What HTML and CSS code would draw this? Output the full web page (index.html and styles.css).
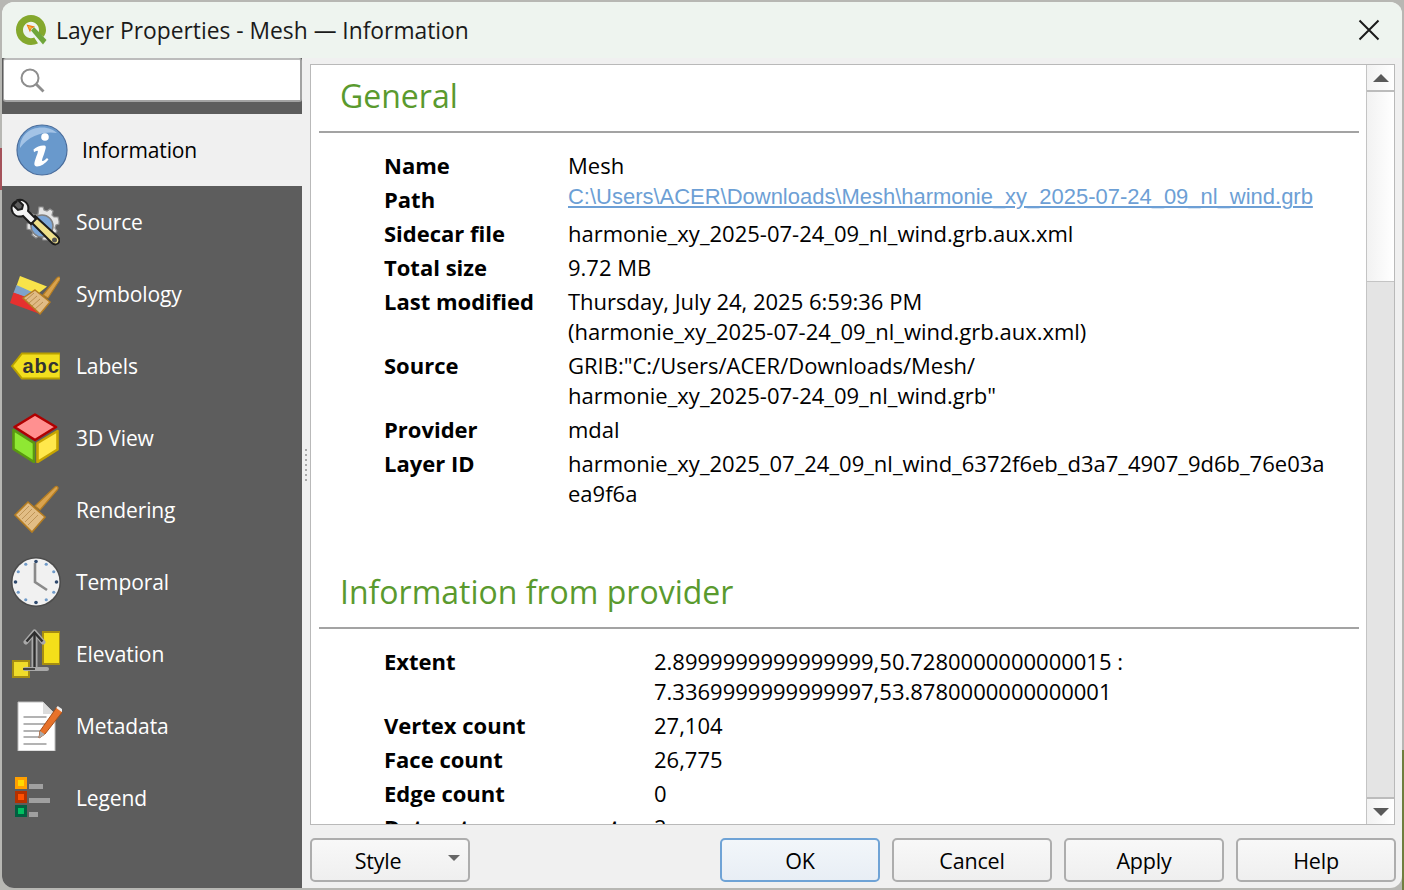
FILE: index.html
```html
<!DOCTYPE html>
<html lang="en">
<head>
<meta charset="utf-8">
<title>Layer Properties - Mesh — Information</title>
<link rel="stylesheet" href="styles.css">
</head>
<body>
<div class="window">
  <header class="titlebar">
    <svg class="qlogo" viewBox="0 0 32 32" width="32" height="32">
      <path d="M16 1C7.700 1 1 7.700 1 16s6.700 15 15 15c2.600 0 5-.6 7-1.700l-3.800-5.700c-1 .4-2 .6-3.200.6-4.400 0-8-3.700-8-8.200S11.600 7.800 16 7.800s8 3.700 8 8.200c0 1-.2 2-.5 2.900l5.200 3.900C30.200 20.500 31 18.300 31 16 31 7.700 24.300 1 16 1z" fill="#84a82d"/>
      <path d="M16 16.500l3-3.500 12.500 13-3.500 4.500z" fill="#6fa63a"/>
      <path d="M11.500 10.500l8.500 2-3.500 2-1.500 4z" fill="#ee7913"/>
      <path d="M13 12l4 1-2 2.500z" fill="#f5b53a"/>
    </svg>
    <span class="title">Layer Properties - Mesh — Information</span>
    <svg class="close" viewBox="0 0 22 22" width="22" height="22"><path d="M1.500 1.500l19 19M20.500 1.500l-19 19" stroke="#1a1a1a" stroke-width="2" fill="none"/></svg>
  </header>
  <div class="body">
    <aside class="sidebar">
      <div class="search">
        <svg viewBox="0 0 26 26" width="26" height="26"><circle cx="11" cy="11" r="8.500" fill="none" stroke="#8e8e8e" stroke-width="2"/><path d="M17 17l7.500 7.500" stroke="#8e8e8e" stroke-width="2.800"/></svg>
      </div>
      <nav class="nav">
        <div class="item active">
          <svg class="ico-big" viewBox="0 0 52 52" width="52" height="52">
            <circle cx="26" cy="26" r="25" fill="#6999cc" stroke="#4a6d9c" stroke-width="1.200"/>
            <path d="M4 24C4 12 13 3.500 26 3.500c7 0 12 2.500 15 5.500C30 7 14 10 4 24z" fill="#a3c3e6"/>
            <circle cx="29" cy="13" r="3.800" fill="#fff"/>
            <path d="M17.500 25.500c3.500-3 7.500-4.500 11-4 2 .5 1.500 2.500 0 7-1.500 4.500-3 8-2.200 8.500 1 .5 3.200-1.300 4.700-3l1.500 1.500c-3 3.700-7.500 7-11.500 7-3.500-.5-3-3-1.500-7.500 1.200-3.500 3-7.500 2.200-8-1-.5-2.500.5-3.700 1.200z" fill="#fff"/>
          </svg>
          <span>Information</span>
        </div>
        <div class="item">
          <svg class="ico" viewBox="0 0 50 50" width="50" height="50">
            <path d="M29 10l4 0 1 3 3 1 3-2 3 2-1 4 2 2 4 0 1 4v3l-3 1-1 3 2 3-3 4-3-1-2 2-1 4h-5l-1-3-3-1-3 2-4-3 1-3-2-2-4-1v-5l3-1 1-3-2-3 3-3 4 1 2-1z" fill="#e4e4e4" stroke="#8f8f8f" stroke-width="1.200"/>
            <circle cx="32" cy="29" r="11" fill="#7ba6d8" stroke="#808080" stroke-width="1.500"/>
            <path d="M25 19l-5 5 22 22c2 2 6 2 7-1 1-2 0-4-1.500-5.500z" fill="#efe08a" stroke="#1c1c1c" stroke-width="2"/>
            <path d="M7 3C2 5 0 10 3 15c2.500 3.500 7 4 10 3l8 8 5-5-8-8c1-4-.5-8-4-10-2-1.300-4-1.500-6-1l5 5-1 4-4 1-5-5z" fill="#f4f4f4" stroke="#1c1c1c" stroke-width="2" transform="translate(0 1)"/>
            <circle cx="44.500" cy="43" r="2.500" fill="#555"/>
          </svg>
          <span>Source</span>
        </div>
        <div class="item">
          <svg class="ico" viewBox="0 0 50 50" width="50" height="50">
            <path d="M10 7l27 10.500-10 8L6.500 17z" fill="#f8e34a"/>
            <path d="M6.500 16l20 9-2 6-21-7z" fill="#7fa3c9"/>
            <path d="M3.500 23.500L24 31l6 14L0 34z" fill="#e6302f"/>
            <path d="M33 26L47 9c1.500-2 4.500-.5 3 1.500L38 29z" fill="#d9a34e" stroke="#b57d22" stroke-width="1.200"/>
            <path d="M25 21l15 12-10 12-17-16z" fill="#e0bb85" stroke="#b57d22" stroke-width="1.500"/>
            <path d="M24 24l-8 7M27 27l-8 7M30 30l-8 7M33 33l-8 7" stroke="#b98e50" stroke-width="1"/>
          </svg>
          <span>Symbology</span>
        </div>
        <div class="item">
          <svg class="ico" viewBox="0 0 50 50" width="50" height="50">
            <path d="M2 25l10-12.500h38.500v25H12z" fill="#f2df1e" stroke="#b8a000" stroke-width="2"/>
            <text x="12.500" y="32" class="abc">abc</text>
          </svg>
          <span>Labels</span>
        </div>
        <div class="item">
          <svg class="ico" viewBox="0 0 50 50" width="50" height="50">
            <path d="M25 1.500L46 14 25 27 4.500 14z" fill="#ff9090" stroke="#b00000" stroke-width="2.600" stroke-linejoin="round"/>
            <path d="M3.500 17L24 30v19L3.500 36z" fill="#8fe833" stroke="#5a9a10" stroke-width="2.600" stroke-linejoin="round"/>
            <path d="M47.500 18L27.500 30v19l20-12.500z" fill="#ffe84c" stroke="#c6a400" stroke-width="2.600" stroke-linejoin="round"/>
          </svg>
          <span>3D View</span>
        </div>
        <div class="item">
          <svg class="ico" viewBox="0 0 50 50" width="50" height="50">
            <path d="M25 21L45 2c2-1.500 4 .5 2.500 2.500L30 25z" fill="#d9a34e" stroke="#b57d22" stroke-width="1.200"/>
            <path d="M18 17l17 15-13 15L5 30z" fill="#e2bd85" stroke="#b57d22" stroke-width="1.600"/>
            <path d="M19 21L9 31M22 24L12 34M25 27L15 37M28 30L18 40" stroke="#bf9558" stroke-width="1"/>
          </svg>
          <span>Rendering</span>
        </div>
        <div class="item">
          <svg class="ico" viewBox="0 0 52 50" width="52" height="50">
            <circle cx="26" cy="25" r="25" fill="#4c4c4c"/>
            <circle cx="26" cy="25" r="23.500" fill="#f1f1f1"/>
            <g fill="#6f9ac8">
              <circle cx="36.250" cy="7.250" r="1.600"/><circle cx="43.750" cy="14.750" r="1.600"/><circle cx="43.750" cy="35.250" r="1.600"/><circle cx="36.250" cy="42.750" r="1.600"/><circle cx="15.750" cy="42.750" r="1.600"/><circle cx="8.250" cy="35.250" r="1.600"/><circle cx="8.250" cy="14.750" r="1.600"/><circle cx="15.750" cy="7.250" r="1.600"/>
            </g>
            <g fill="#2f4a6e">
              <circle cx="26" cy="4.500" r="1.800"/><circle cx="46.500" cy="25" r="1.800"/><circle cx="26" cy="45.500" r="1.800"/><circle cx="5.500" cy="25" r="1.800"/>
            </g>
            <path d="M25 6v19l12 8" fill="none" stroke="#8a8a8a" stroke-width="2.600"/>
          </svg>
          <span class="after-wide">Temporal</span>
        </div>
        <div class="item">
          <svg class="ico" viewBox="0 0 50 50" width="50" height="50">
            <rect x="33" y="3" width="17" height="32" fill="#f4df1a" stroke="#a68d12" stroke-width="2"/>
            <rect x="3" y="32" width="16" height="16" fill="#f0dc2a" stroke="#a68d12" stroke-width="2"/>
            <path d="M15 40h22" stroke="#a9a9a9" stroke-width="4" stroke-linecap="round"/>
            <path d="M13 40h12" stroke="#222" stroke-width="1.500"/>
            <path d="M16 13L24.500 3 33 13" fill="none" stroke="#a9a9a9" stroke-width="5" stroke-linejoin="round" stroke-linecap="round"/>
            <path d="M24.500 5v34" stroke="#a9a9a9" stroke-width="6"/>
            <path d="M16.500 12.500L24.500 3.500l8 9" fill="none" stroke="#2e2e2e" stroke-width="2.400"/>
            <path d="M24.500 5v33" stroke="#2e2e2e" stroke-width="2.400"/>
          </svg>
          <span>Elevation</span>
        </div>
        <div class="item">
          <svg class="ico" viewBox="0 0 52 50" width="52" height="50">
            <path d="M8 1h25l12 12v37H8z" fill="#fff" stroke="#bdbdbd"/>
            <path d="M33 1v12h12z" fill="#dcdcdc"/>
            <path d="M13.500 16h23M13.500 23h23M13.500 30h17M13.500 36h17M13.500 43h23" stroke="#9a9a9a" stroke-width="1.600"/>
            <path d="M47 6l6 4-18 23-6 4 1-7z" fill="#e8722a" stroke="#a8501a" stroke-width="1"/>
            <path d="M47 6l5.500 4" stroke="#eee" stroke-width="2.500"/>
            <path d="M30 30l5 3.500-6 3.500z" fill="#aaa"/>
          </svg>
          <span class="after-wide">Metadata</span>
        </div>
        <div class="item">
          <svg class="ico" viewBox="0 0 50 50" width="50" height="50">
            <rect x="5" y="4" width="12" height="12" fill="#ffa000"/><rect x="8" y="7" width="6" height="6" fill="#ffd900"/>
            <rect x="5" y="18" width="12" height="12" fill="#b33000"/><rect x="8" y="21" width="6" height="6" fill="#ff5000"/>
            <rect x="5" y="32" width="12" height="12" fill="#006040"/><rect x="8" y="35" width="6" height="6" fill="#00c060"/>
            <rect x="19" y="11" width="14" height="5" fill="#a0a0a0"/><rect x="19" y="25" width="21" height="5" fill="#a0a0a0"/><rect x="19" y="39" width="9" height="5" fill="#a0a0a0"/>
          </svg>
          <span>Legend</span>
        </div>
      </nav>
    </aside>
    <div class="splitter"><i class="grip"></i></div>
    <main class="main">
      <div class="browser">
        <div class="content">
          <h2>General</h2>
          <table class="t1">
            <tr><th>Name</th><td>Mesh</td></tr>
            <tr><th>Path</th><td><a class="link">C:\Users\ACER\Downloads\Mesh\harmonie_xy_2025-07-24_09_nl_wind.grb</a></td></tr>
            <tr><th>Sidecar file</th><td>harmonie_xy_2025-07-24_09_nl_wind.grb.aux.xml</td></tr>
            <tr><th>Total size</th><td>9.72 MB</td></tr>
            <tr><th>Last modified</th><td>Thursday, July 24, 2025 6:59:36 PM<br>(harmonie_xy_2025-07-24_09_nl_wind.grb.aux.xml)</td></tr>
            <tr><th>Source</th><td>GRIB:"C:/Users/ACER/Downloads/Mesh/<br>harmonie_xy_2025-07-24_09_nl_wind.grb"</td></tr>
            <tr><th>Provider</th><td>mdal</td></tr>
            <tr><th>Layer ID</th><td>harmonie_xy_2025_07_24_09_nl_wind_6372f6eb_d3a7_4907_9d6b_76e03a<br>ea9f6a</td></tr>
          </table>
          <h2 class="second">Information from provider</h2>
          <table class="t2">
            <tr><th>Extent</th><td>2.8999999999999999,50.7280000000000015 :<br>7.3369999999999997,53.8780000000000001</td></tr>
            <tr><th>Vertex count</th><td>27,104</td></tr>
            <tr><th>Face count</th><td>26,775</td></tr>
            <tr><th>Edge count</th><td>0</td></tr>
            <tr><th>Dataset groups count</th><td>2</td></tr>
          </table>
        </div>
        <div class="scrollbar">
          <div class="sb-btn"><i class="up"></i></div>
          <div class="sb-thumb"></div>
          <div class="sb-track"></div>
          <div class="sb-btn down"><i class="dn"></i></div>
        </div>
      </div>
      <footer class="buttons">
        <button class="btn style">Style<i class="caret"></i></button>
        <span class="spacer"></span>
        <button class="btn default">OK</button>
        <button class="btn">Cancel</button>
        <button class="btn">Apply</button>
        <button class="btn">Help</button>
      </footer>
    </main>
  </div>
</div>
</body>
</html>
```
FILE: styles.css
```css
* { box-sizing: border-box; }
html, body { margin: 0; padding: 0; }
body {
  width: 1404px; height: 890px; overflow: hidden; padding: 2px;
  background-color: #b7b7b3;
  background-image:
    linear-gradient(#a5525a, #a5525a),
    linear-gradient(#6f7f3f, #6f7f3f);
  background-size: 2px 42px, 2px 140px;
  background-position: 0 148px, 100% 750px;
  background-repeat: no-repeat;
  font-family: "Open Sans", "Noto Sans", sans-serif;
  color: #000;
}
.window {
  width: 1400px; height: 886px; background: #f0f0f0;
  border-radius: 12px; overflow: hidden; display: flex; flex-direction: column;
}
.titlebar {
  height: 56px; background: #eef4ef; display: flex; align-items: center;
  padding: 0 22px 0 13px; flex: none;
}
.qlogo { flex: none; }
.title { margin-left: 9px; font-size: 22.8px; color: #1a1a1a; flex: 1; }
.body { flex: 1; display: flex; min-height: 0; }
.sidebar { width: 300px; background: #5d5d5d; flex: none; }
.search {
  height: 44px; background: #fff; margin: 0 0 12px 1px; width: 299px;
  border: 2px solid #a2a2a2; border-top-color: #bcbcbc; border-radius: 3px;
  display: flex; align-items: center; padding: 0 0 0 15px;
  border-left-width: 1px; border-right-width: 2px;
}
.item {
  height: 72px; display: flex; align-items: center; color: #fff;
  font-size: 21px; padding-left: 8px; letter-spacing: -.12px;
}
.item span { margin-left: 16px; }
.item span.after-wide { margin-left: 14px; }
.ico { flex: none; }
.item.active { background: #f0f0f0; color: #000; padding-left: 14px; }
.item.active span { margin-left: 14px; }
.ico-big { flex: none; }
.abc { font: 700 20px "Liberation Sans", sans-serif; fill: #333; letter-spacing: 1px; }
.splitter { width: 8px; flex: none; display: flex; align-items: center; justify-content: center; }
.grip { display: block; width: 2px; height: 32px; margin-bottom: 16px; background: repeating-linear-gradient(#a8a8a8 0 2px, transparent 2px 5px); }
.main { flex: 1; display: flex; flex-direction: column; padding: 6px 6px 6px 0; min-width: 0; }
.browser {
  height: 761px; flex: none; background: #fff; border: 1px solid #b9b9b9; display: flex; margin-right: 1px;
}
.content { flex: 1; overflow: hidden; padding: 0 7px 0 8px; min-width: 0; }
h2 {
  margin: 0; font-weight: 400; font-size: 32px; color: #5a9a2e; line-height: 44px;
  padding: 9px 0 12px 21px; border-bottom: 2px solid #a3a3a3; height: 68px;
}
h2.second { margin-top: 51px; height: 68px; }
table { border-collapse: collapse; margin-left: 65px; font-size: 22px; line-height: 30px; }
.t1 { margin-top: 15px; }
.t2 { margin-top: 15px; }
th, td { padding: 2px 0; text-align: left; vertical-align: top; }
th { font-weight: 700; }
.t1 th { width: 184px; }
.t2 th { width: 270px; }
.link { font: 21.970px/22px "Liberation Sans", sans-serif; color: #6d9fd5; text-decoration: underline; display: block; padding-top: 2px; }
.scrollbar { width: 28px; flex: none; border-left: 1px solid #c4c4c4; display: flex; flex-direction: column; background: linear-gradient(90deg, #f2f2f2, #fff); }
.sb-btn { height: 27px; flex: none; display: flex; align-items: center; justify-content: center; border-bottom: 2px solid #bcbcbc; }
.sb-btn.down { border-bottom: 0; border-top: 2px solid #bcbcbc; }
.up { border: 8px solid transparent; border-top: 0; border-bottom: 8px solid #5a5a5a; }
.dn { border: 8px solid transparent; border-bottom: 0; border-top: 8px solid #5a5a5a; }
.sb-thumb { height: 189px; flex: none; }
.sb-track { flex: 1; background: #e4e4e4; border-top: 1px solid #c4c4c4; }
.buttons { flex: 1; display: flex; align-items: center; gap: 12px; padding: 13px 0 0 0; }
.spacer { flex: 1; }
.btn {
  width: 160px; height: 44px; font: 21.500px "Open Sans", sans-serif; color: #000;
  background: linear-gradient(#f8f8f8, #efefef); border: 2px solid #adadad; border-radius: 5px;
  padding: 0; letter-spacing: -.2px;
}
.btn.default { border-color: #6fa3d6; background: linear-gradient(#f2f6fa, #e8eef5); }
.btn.style { position: relative; padding-right: 24px; }
.caret { position: absolute; right: 8px; top: 15px; border: 6px solid transparent; border-bottom: 0; border-top: 6px solid #666; }
```
